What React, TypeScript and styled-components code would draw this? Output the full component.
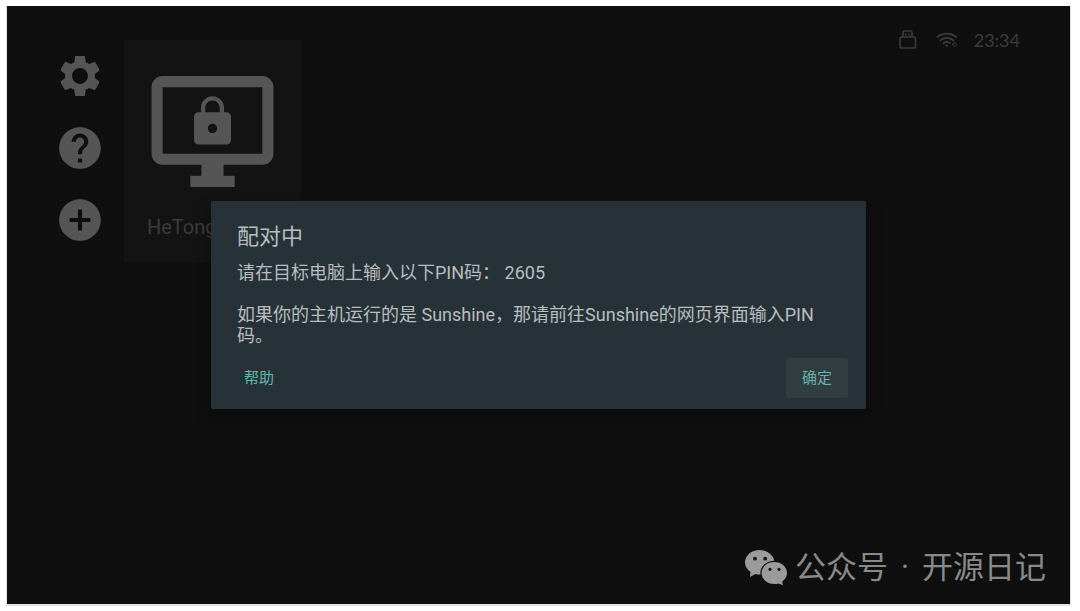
import React from 'react';
import styled, { createGlobalStyle } from 'styled-components';

const GlobalStyle = createGlobalStyle`
  * { box-sizing: border-box; }
  body {
    margin: 0;
    background: #fff;
    font-family: Roboto, "Noto Sans CJK SC", sans-serif;
  }
`;

const Page = styled.div`
  display: flex;
  min-height: 100vh;
  padding: 6px 10px 7px 7px;
`;

const Screen = styled.div`
  position: relative;
  flex: 1;
  display: flex;
  flex-direction: column;
  background: #0f0f0f;
  box-shadow: 0 1px 0 1px #e2e2e2;
`;

const Home = styled.main`
  flex: 1;
  display: flex;
  align-items: flex-start;
  padding: 34px 50px 0 48px;
`;

const SideNav = styled.nav`
  display: flex;
  flex-direction: column;
  gap: 22px;
  padding-top: 11px;
  margin-right: 19px;
`;

const IconButton = styled.button`
  display: block;
  width: 50px;
  height: 50px;
  padding: 0;
  border: 0;
  background: none;
  color: #555;

  svg { display: block; width: 100%; height: 100%; }
`;

const ComputerCard = styled.button`
  display: flex;
  flex-direction: column;
  align-items: center;
  width: 177px;
  height: 222px;
  padding: 25px 0 0;
  border: 0;
  background: #131313;
  color: #555;
  font-family: inherit;
`;

const ComputerName = styled.span`
  align-self: flex-start;
  margin: 17px 0 0 23px;
  color: #3b3b3b;
  font-size: 20px;
  line-height: 24px;
`;

const StatusBar = styled.div`
  display: flex;
  align-items: center;
  height: 24px;
  margin: -12px 0 0 auto;
  color: #3c3c3c;
`;

const Clock = styled.time`
  margin-left: 16px;
  font-family: Lato, sans-serif;
  font-size: 18px;
  line-height: 24px;
`;

const UsbSlot = styled.span`
  display: flex;
  margin-right: 19px;
`;

const Overlay = styled.div`
  position: absolute;
  inset: 0;
  display: flex;
  align-items: center;
  justify-content: center;
`;

const Dialog = styled.section`
  width: 655px;
  max-width: 100%;
  padding: 20px 18px 11px 26px;
  border-radius: 2px;
  background: #263238;
  color: #b9bdbf;
  box-shadow: 0 6px 14px 2px rgba(0, 0, 0, 0.25);
`;

const DialogTitle = styled.h1`
  margin: 0 0 9px;
  font-size: 22px;
  font-weight: 400;
  line-height: 32px;
`;

const DialogText = styled.p`
  margin: 0 0 21px;
  padding-right: 20px;
  font-size: 18px;
  line-height: 21px;

  &:last-of-type { margin-bottom: 12px; }
`;

const Actions = styled.div`
  display: flex;
  justify-content: space-between;
`;

const ActionButton = styled.button<{ $focused?: boolean }>`
  height: 40px;
  padding: 0 ${(p) => (p.$focused ? 16 : 7)}px;
  border: 0;
  border-radius: 2px;
  background: ${(p) => (p.$focused ? '#323d42' : 'transparent')};
  color: #68b3aa;
  font-family: inherit;
  font-size: 15px;
  line-height: 38px;
`;

const Credit = styled.footer`
  display: flex;
  align-items: center;
  justify-content: flex-end;
  gap: 7px;
  padding: 0 24px 16px;
  color: #8a8a8a;
  font-size: 31px;
  line-height: 40px;
`;

const CreditText = styled.span`
  display: flex;
  gap: 13px;
`;

const GearIcon = () => (
  <svg viewBox="0 0 24 24" fill="currentColor" aria-hidden="true">
    <path d="M19.14 12.94c.04-.3.06-.61.06-.94 0-.32-.02-.64-.07-.94l2.03-1.58c.18-.14.23-.41.12-.61l-1.92-3.32c-.12-.22-.37-.29-.59-.22l-2.39.96c-.5-.38-1.03-.7-1.62-.94l-.36-2.54c-.04-.24-.24-.41-.48-.41h-3.84c-.24 0-.43.17-.47.41l-.36 2.54c-.59.24-1.13.57-1.62.94l-2.39-.96c-.22-.08-.47 0-.59.22L2.74 8.87c-.12.21-.08.47.12.61l2.03 1.58c-.05.3-.09.63-.09.94s.02.64.07.94l-2.03 1.58c-.18.14-.23.41-.12.61l1.92 3.32c.12.22.37.29.59.22l2.39-.96c.5.38 1.03.7 1.62.94l.36 2.54c.05.24.24.41.48.41h3.84c.24 0 .44-.17.47-.41l.36-2.54c.59-.24 1.13-.56 1.62-.94l2.39.96c.22.08.47 0 .59-.22l1.92-3.32c.12-.22.07-.47-.12-.61l-2.01-1.58zM12 15.8c-2.1 0-3.8-1.7-3.8-3.8s1.7-3.8 3.8-3.8 3.8 1.7 3.8 3.8-1.7 3.800-3.800 3.800z" />
  </svg>
);

const HelpIcon = () => (
  <svg viewBox="0 0 24 24" fill="currentColor" aria-hidden="true">
    <path d="M12 2C6.48 2 2 6.48 2 12s4.48 10 10 10 10-4.48 10-10S17.52 2 12 2zm1 17h-2v-2h2v2zm2.07-7.75l-.9.92C13.45 12.9 13 13.5 13 15h-2v-.5c0-1.1.45-2.1 1.17-2.83l1.24-1.26c.37-.36.59-.86.59-1.41 0-1.1-.9-2-2-2s-2 .9-2 2H8c0-2.21 1.79-4 4-4s4 1.79 4 4c0 .88-.36 1.68-.93 2.25z" />
  </svg>
);

const AddIcon = () => (
  <svg viewBox="0 0 24 24" fill="currentColor" aria-hidden="true">
    <path d="M12 2C6.48 2 2 6.48 2 12s4.48 10 10 10 10-4.48 10-10S17.52 2 12 2zm5 11h-4v4h-2v-4H7v-2h4V7h2v4h4v2z" />
  </svg>
);

const LockedComputerIcon = () => (
  <svg width="133" height="133" viewBox="0 0 24 24" fill="currentColor" aria-hidden="true">
    <path d="M21 2H3c-1.1 0-2 .9-2 2v12c0 1.1.9 2 2 2h7v2H8v2h8v-2h-2v-2h7c1.1 0 2-.9 2-2V4c0-1.1-.9-2-2-2zm0 14H3V4h18v12z" />
    <path
      transform="translate(7 5.2) scale(.4167)"
      d="M18 8h-1V6c0-2.76-2.24-5-5-5S7 3.24 7 6v2H6c-1.1 0-2 .9-2 2v10c0 1.1.9 2 2 2h12c1.1 0 2-.9 2-2V10c0-1.1-.9-2-2-2zm-6 9c-1.1 0-2-.9-2-2s.9-2 2-2 2 .9 2 2-.9 2-2 2zm3.1-9H8.9V6c0-1.71 1.39-3.1 3.1-3.1 1.71 0 3.1 1.39 3.1 3.1v2z"
    />
  </svg>
);

const UsbIcon = () => (
  <svg width="18" height="20" viewBox="0 0 18 20" fill="none" stroke="currentColor" strokeWidth="1.6" aria-hidden="true">
    <path d="M4 7V2.500q0-1.500 1.500-1.500h6q1.500 0 1.500 1.500V7" />
    <rect x="1" y="7" width="15.500" height="11" rx="1.800" />
    <path d="M6.800 3.400v2M10.300 3.400v2" />
  </svg>
);

const WifiIcon = () => (
  <svg width="22" height="16" viewBox="0 0 22 16" fill="none" stroke="currentColor" strokeWidth="1.7" aria-hidden="true">
    <path d="M1 5.400C6.600.3 15 .3 20.600 5.400" />
    <path d="M3.800 8.600c4-3.700 10-3.700 14 0" />
    <path d="M6.700 11.600c2.400-2.200 5.400-2.200 7.800-.4" />
    <circle cx="10.700" cy="13.700" r="1.200" fill="currentColor" stroke="none" />
    <path d="M18.600 9.600c-1 .7-1.700 1.800-1.700 3" strokeWidth="1" />
    <circle cx="18.600" cy="12.700" r="1.700" strokeWidth="1" />
  </svg>
);

const WeChatIcon = () => (
  <svg width="43" height="36" viewBox="0 0 43 36" fill="#9b9b9b" aria-hidden="true">
    <path d="M14.7 0C6.6 0 0 5.5 0 12.4c0 3.9 2.2 7.2 5.5 9.500L5 27l5.300-3.100c1.400.4 2.900.6 4.400.6 8.100 0 14.700-5.300 14.700-12.100S22.800 0 14.700 0z" />
    <path
      stroke="#0f0f0f"
      strokeWidth="2.400"
      paintOrder="stroke"
      d="M29.3 12c-7 0-12.7 4.9-12.7 11s5.7 11 12.7 11c1.5 0 3-.2 4.3-.6l4.4 1.9-.8-3.8c2.9-2 4.8-5 4.8-8.500 0-6.100-5.700-11-12.700-11z"
    />
    <g fill="#161616">
      <circle cx="10" cy="8.700" r="1.900" />
      <circle cx="20.200" cy="8.700" r="1.900" />
      <circle cx="25" cy="19.300" r="1.600" />
      <circle cx="34" cy="19.300" r="1.600" />
    </g>
  </svg>
);

export default function App() {
  return (
    <>
      <GlobalStyle />
      <Page>
        <Screen>
          <Home>
            <SideNav>
              <IconButton aria-label="设置"><GearIcon /></IconButton>
              <IconButton aria-label="帮助"><HelpIcon /></IconButton>
              <IconButton aria-label="添加"><AddIcon /></IconButton>
            </SideNav>
            <ComputerCard>
              <LockedComputerIcon />
              <ComputerName>HeTong</ComputerName>
            </ComputerCard>
            <StatusBar>
              <UsbSlot><UsbIcon /></UsbSlot>
              <WifiIcon />
              <Clock>23:34</Clock>
            </StatusBar>
          </Home>
          <Overlay>
            <Dialog role="dialog" aria-labelledby="pair-title">
              <DialogTitle id="pair-title">配对中</DialogTitle>
              <DialogText>请在目标电脑上输入以下PIN码： 2605</DialogText>
              <DialogText>
                如果你的主机运行的是 Sunshine，那请前往Sunshine的网页界面输入PIN码。
              </DialogText>
              <Actions>
                <ActionButton>帮助</ActionButton>
                <ActionButton $focused>确定</ActionButton>
              </Actions>
            </Dialog>
          </Overlay>
          <Credit>
            <WeChatIcon />
            <CreditText>
              <span>公众号</span>
              <span>·</span>
              <span>开源日记</span>
            </CreditText>
          </Credit>
        </Screen>
      </Page>
    </>
  );
}
